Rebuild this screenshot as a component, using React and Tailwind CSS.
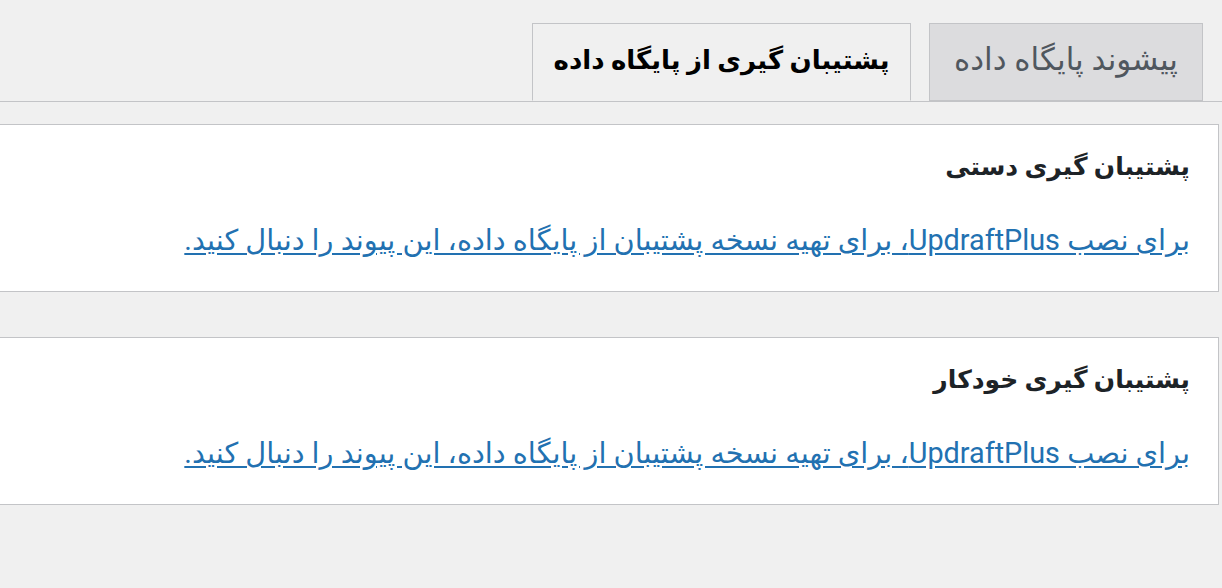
const linkText = 'برای نصب UpdraftPlus، برای تهیه نسخه پشتیبان از پایگاه داده، این پیوند را دنبال کنید.';

function Postbox({ title }) {
  return (
    <div className="-ml-[2px] border border-[#c3c4c7] bg-white pr-7 pb-[31px] pt-[22px]">
      <h2 className="text-[25px] font-semibold leading-[40px] text-[#1d2327]">{title}</h2>
      <p className="mt-[33px] text-[28.8px] leading-[40px]">
        <a href="#" className="text-[#2271b1] underline underline-offset-[3px]">{linkText}</a>
      </p>
    </div>
  );
}

export default function App() {
  return (
    <div
      dir="rtl"
      className="min-h-screen bg-[#f0f0f0] pr-[3px]"
      style={{ fontFamily: 'Roboto, "DejaVu Sans", sans-serif' }}
    >
      <nav className="-mr-[3px] flex gap-[18px] border-b border-[#c3c4c7] pr-[19px] pt-[23px]">
        <a href="#" className="flex h-[78px] w-[274px] items-center justify-center border border-[#c3c4c7] bg-[#dcdcde] pb-1 text-[31px] text-[#50575e]">
          پیشوند پایگاه داده
        </a>
        <a href="#" className="-mb-px flex h-[78px] w-[379px] items-center justify-center border border-[#c3c4c7] border-b-[#f0f0f0] bg-[#f0f0f0] pb-1 text-[26px] font-semibold text-black">
          پشتیبان گیری از پایگاه داده
        </a>
      </nav>
      <div className="mt-[22px] flex flex-col gap-[45px]">
        <Postbox title="پشتیبان گیری دستی" />
        <Postbox title="پشتیبان گیری خودکار" />
      </div>
    </div>
  );
}
